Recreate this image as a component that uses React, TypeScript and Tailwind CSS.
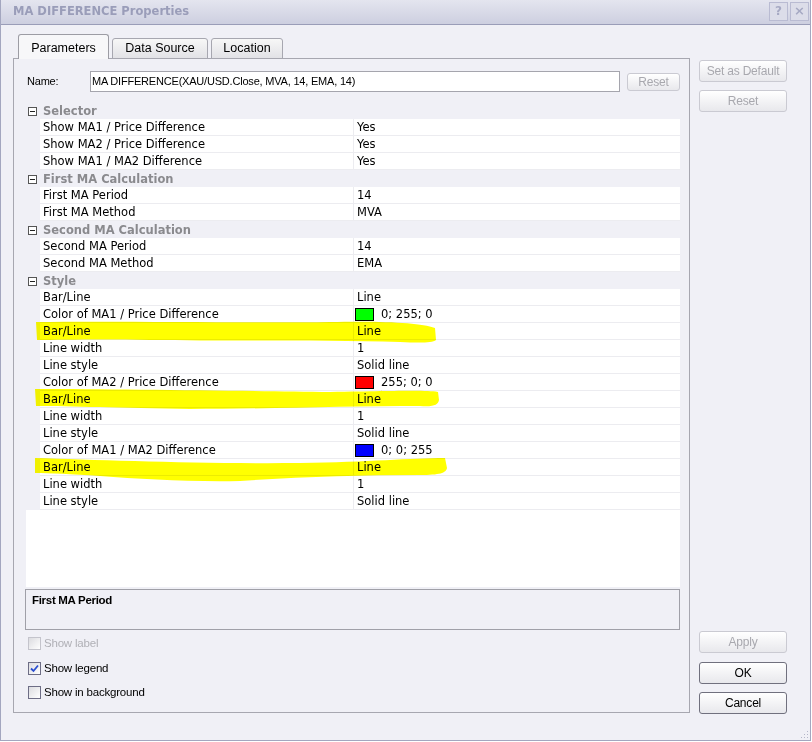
import React from "react";

type Row =
  | { kind: "cat"; label: string }
  | { kind: "item"; label: string; value: string; color?: string };

const rows: Row[] = [
  { kind: "cat", label: "Selector" },
  { kind: "item", label: "Show MA1 / Price Difference", value: "Yes" },
  { kind: "item", label: "Show MA2 / Price Difference", value: "Yes" },
  { kind: "item", label: "Show MA1 / MA2 Difference", value: "Yes" },
  { kind: "cat", label: "First MA Calculation" },
  { kind: "item", label: "First MA Period", value: "14" },
  { kind: "item", label: "First MA Method", value: "MVA" },
  { kind: "cat", label: "Second MA Calculation" },
  { kind: "item", label: "Second MA Period", value: "14" },
  { kind: "item", label: "Second MA Method", value: "EMA" },
  { kind: "cat", label: "Style" },
  { kind: "item", label: "Bar/Line", value: "Line" },
  { kind: "item", label: "Color of MA1 / Price Difference", value: "0; 255; 0", color: "#00ff00" },
  { kind: "item", label: "Bar/Line", value: "Line" },
  { kind: "item", label: "Line width", value: "1" },
  { kind: "item", label: "Line style", value: "Solid line" },
  { kind: "item", label: "Color of MA2 / Price Difference", value: "255; 0; 0", color: "#ff0000" },
  { kind: "item", label: "Bar/Line", value: "Line" },
  { kind: "item", label: "Line width", value: "1" },
  { kind: "item", label: "Line style", value: "Solid line" },
  { kind: "item", label: "Color of MA1 / MA2 Difference", value: "0; 0; 255", color: "#0000ff" },
  { kind: "item", label: "Bar/Line", value: "Line" },
  { kind: "item", label: "Line width", value: "1" },
  { kind: "item", label: "Line style", value: "Solid line" },
];

function WinButton({ label, disabled, className }: { label: string; disabled?: boolean; className?: string }) {
  return (
    <div
      className={
        "flex items-center justify-center rounded-[3px] border bg-gradient-to-b from-white to-[#e8e8ec] text-[12px] font-['Liberation_Sans',Arial,sans-serif] tracking-[-0.2px] " +
        (disabled ? "border-[#cacad2] text-[#a8a8ae]" : "border-[#70707e] text-black") +
        " " +
        (className || "")
      }
    >
      {label}
    </div>
  );
}

function CheckBox({ label, checked, disabled }: { label: string; checked?: boolean; disabled?: boolean }) {
  return (
    <div className="flex items-center h-[13px] gap-[3px]">
      <div
        className={
          "w-[13px] h-[13px] border flex items-center justify-center bg-gradient-to-br from-[#dcdce0] to-white " +
          (disabled ? "border-[#c4c4cc]" : "border-[#6d6d85]")
        }
      >
        {checked && (
          <svg width="9" height="9" viewBox="0 0 9 9">
            <path d="M1 4.5 L3.5 7 L8 1.5" fill="none" stroke="#2a4ed0" strokeWidth="1.8" />
          </svg>
        )}
      </div>
      <span
        className={
          "text-[11.5px] font-['Liberation_Sans',Arial,sans-serif] tracking-[-0.2px] leading-none " +
          (disabled ? "text-[#b0b0b6]" : "text-black")
        }
      >
        {label}
      </span>
    </div>
  );
}

function MinusBox() {
  return (
    <div className="ml-[2px] w-[9px] h-[9px] border border-[#555] bg-white flex items-center justify-center">
      <div className="w-[5px] h-px bg-[#222]" />
    </div>
  );
}

function PropertyGrid() {
  return (
    <div className="relative ml-[12px] mt-[10px] w-[654px] h-[485px] bg-white font-['DejaVu_Sans',Verdana,sans-serif] text-[11.5px]">
      {rows.map((r, i) =>
        r.kind === "cat" ? (
          <div key={i} className="flex items-center h-[17px] bg-[#f0f0f6]">
            <div className="w-[14px] flex items-center pt-[1px]">
              <MinusBox />
            </div>
            <span className="pl-[3px] pt-[2px] font-bold text-[#8a8a8e] leading-none">{r.label}</span>
          </div>
        ) : (
          <div key={i} className="flex h-[17px]">
            <div className="w-[14px] bg-[#f0f0f6]" />
            <div className="flex-1 flex border-b border-[#ececf0]">
              <div className="w-[313px] pl-[3px] pt-[2px] flex items-center text-black leading-none">{r.label}</div>
              <div className="w-px bg-[#ececf0]" />
              <div className="flex-1 pl-[3px] pt-[2px] flex items-center text-black leading-none">
                {r.color && (
                  <div className="w-[19px] h-[13px] border border-black mr-[7px] -ml-[2px] -mt-[2px]" style={{ background: r.color }} />
                )}
                {r.value}
              </div>
            </div>
          </div>
        )
      )}
      <svg
        className="absolute inset-0 pointer-events-none mix-blend-multiply"
        width="654"
        height="485"
        viewBox="26 102 654 485"
      >
        <g fill="#ffff00">
          <path d="M36 322 C120 321 250 323 330 322 C390 321 420 323 435 328 L436 340 C432 343 420 343 400 342 C320 340 220 341 150 340 C100 339 60 340 37 340 Z" />
          <path d="M35 389 C120 389 250 391 330 392 C400 391 425 390 438 392 L439 400 C438 405 434 407 420 406 C350 406 260 409 190 409 C120 408 70 406 36 406 Z" />
          <path d="M35 458 C100 460 200 464 300 463 C370 462 410 458 445 458 L447 468 C446 473 440 475 420 475 C360 475 300 477 240 481 C190 482 140 479 100 476 C70 474 50 473 35 473 Z" />
        </g>
      </svg>
    </div>
  );
}

export default function App() {
  return (
    <div className="w-[811px] h-[741px] flex flex-col bg-[#f0f0f6] border-l border-r border-b border-[#a3a6bf]">
      {/* title bar */}
      <div className="h-[25px] flex items-center justify-between bg-gradient-to-b from-[#e4e5ef] to-[#cdcfe0] border-b border-[#9a9db8] pl-[12px] pr-[1px]">
        <span className="font-['DejaVu_Sans',Verdana,sans-serif] font-bold text-[11.5px] text-[#9a9db9]">
          MA DIFFERENCE Properties
        </span>
        <div className="flex gap-[2px] mb-[2px]">
          <div className="w-[19px] h-[19px] border border-[#b9bbd2] bg-[#dcdde9] flex items-center justify-center text-[12px] font-bold text-[#a6a9c3] font-['DejaVu_Sans',sans-serif]">
            ?
          </div>
          <div className="w-[19px] h-[19px] border border-[#b9bbd2] bg-[#dcdde9] flex items-center justify-center text-[13px] font-bold text-[#a6a9c3] font-['DejaVu_Sans',sans-serif]">
            ×
          </div>
        </div>
      </div>

      {/* body */}
      <div className="flex-1 flex pl-[12px]">
        {/* left: tabs + panel */}
        <div className="w-[677px] flex flex-col pt-[9px]">
          <div className="relative z-10 flex items-end h-[25px] -mb-px pl-[5px] gap-[3px] font-['Liberation_Sans',Arial,sans-serif] text-[12.5px] text-black">
            <div className="w-[91px] h-[25px] border border-b-0 border-[#9c9ca4] rounded-t-[3px] bg-[#f7f7f9] flex items-center justify-center pt-[3px]">
              Parameters
            </div>
            <div className="w-[96px] h-[21px] border border-[#a7a7b0] rounded-t-[3px] bg-gradient-to-b from-[#f7f7f7] to-[#e2e2e6] flex items-center justify-center">
              Data Source
            </div>
            <div className="w-[72px] h-[21px] border border-[#a7a7b0] rounded-t-[3px] bg-gradient-to-b from-[#f7f7f7] to-[#e2e2e6] flex items-center justify-center">
              Location
            </div>
          </div>
          <div className="h-[655px] border border-[#a7a7b0] flex flex-col">
            {/* name row */}
            <div className="flex items-center mt-[12px] h-[21px] font-['Liberation_Sans',Arial,sans-serif] text-[11px] tracking-[-0.2px]">
              <span className="w-[76px] shrink-0 pl-[13px] text-black">Name:</span>
              <div className="w-[530px] h-[21px] border border-[#a5a5ad] bg-white flex items-center pl-[1px] text-black">
                MA DIFFERENCE(XAU/USD.Close, MVA, 14, EMA, 14)
              </div>
              <WinButton label="Reset" disabled className="ml-[7px] w-[53px] h-[18px]" />
            </div>

            <PropertyGrid />

            {/* description */}
            <div className="ml-[11px] mt-[2px] w-[655px] h-[41px] border border-[#a0a0a8] bg-[#f0f0f6] pl-[6px] pt-[2px] font-['Liberation_Sans',Arial,sans-serif] text-[11.5px] font-bold tracking-[-0.3px] text-black">
              First MA Period
            </div>

            {/* checkboxes */}
            <div className="ml-[14px] mt-[7px] flex flex-col">
              <CheckBox label="Show label" disabled />
              <div className="mt-[12px]">
                <CheckBox label="Show legend" checked />
              </div>
              <div className="mt-[11px]">
                <CheckBox label="Show in background" />
              </div>
            </div>
          </div>
        </div>

        {/* right: buttons */}
        <div className="ml-[9px] w-[88px] flex flex-col pt-[35px]">
          <WinButton label="Set as Default" disabled className="h-[22px]" />
          <WinButton label="Reset" disabled className="h-[22px] mt-[8px]" />
          <div className="flex-1" />
          <WinButton label="Apply" disabled className="h-[22px]" />
          <WinButton label="OK" className="h-[22px] mt-[9px]" />
          <WinButton label="Cancel" className="h-[22px] mt-[8px] mb-[26px]" />
        </div>
        <div className="flex-1 flex items-end justify-end pb-[1px] pr-[1px]">
          <svg width="8" height="8" viewBox="0 0 8 8">
            <g fill="#b4b6c8">
              <rect x="6" y="0" width="1" height="1" />
              <rect x="3" y="3" width="1" height="1" />
              <rect x="6" y="3" width="1" height="1" />
              <rect x="0" y="6" width="1" height="1" />
              <rect x="3" y="6" width="1" height="1" />
              <rect x="6" y="6" width="1" height="1" />
            </g>
          </svg>
        </div>
      </div>
    </div>
  );
}
